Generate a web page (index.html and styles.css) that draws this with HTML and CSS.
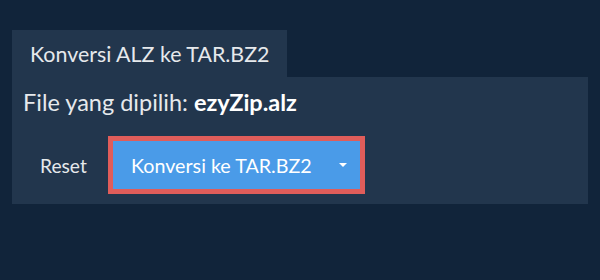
FILE: index.html
```html
<!DOCTYPE html>
<html lang="id">
<head>
<meta charset="utf-8">
<link rel="stylesheet" href="styles.css">
</head>
<body>
<div class="wrap">
  <div class="tabs"><div class="tab">Konversi ALZ ke TAR.BZ2</div></div>
  <div class="panel">
    <div class="file">File yang dipilih: <b>ezyZip.alz</b></div>
    <div class="actions">
      <button class="reset">Reset</button>
      <div class="hl">
        <button class="convert"><span>Konversi ke TAR.BZ2</span><span class="caret"></span></button>
      </div>
    </div>
  </div>
</div>
</body>
</html>
```
FILE: styles.css
```css
html, body { margin: 0; padding: 0; background: #11243a; }
body { font-family: Lato, "Noto Sans", sans-serif; color: #e6e9ec; width: 600px; height: 280px; overflow: hidden; }
.wrap { padding: 30px 12px 0 12px; }
.tabs { display: flex; }
.tab { background: #22364d; height: 47px; width: 275px; box-sizing: border-box; padding-left: 18px; display: flex; align-items: center; font-size: 21.4px; }
.panel { background: #22364d; height: 127px; box-sizing: border-box; padding: 11px 11px 0 11px; }
.file { font-size: 23.5px; line-height: 28px; }
.file b { font-weight: 700; color: #fff; }
.actions { display: flex; align-items: center; margin-top: 20px; }
.reset { background: none; border: 0; color: #e6e9ec; font: inherit; font-size: 19.2px; padding: 0; margin-left: 17px; width: 68px; text-align: left; }
.hl { border: 5px solid #e05d5a; }
.convert { background: #4a9be8; border: 0; color: #fff; font: inherit; font-size: 19.7px; width: 247px; height: 48px; display: flex; align-items: center; padding: 0 13px 0 18px; box-sizing: border-box; justify-content: space-between; }
.caret { width: 0; height: 0; border-left: 4px solid transparent; border-right: 4px solid transparent; border-top: 4px solid #fff; }
```
